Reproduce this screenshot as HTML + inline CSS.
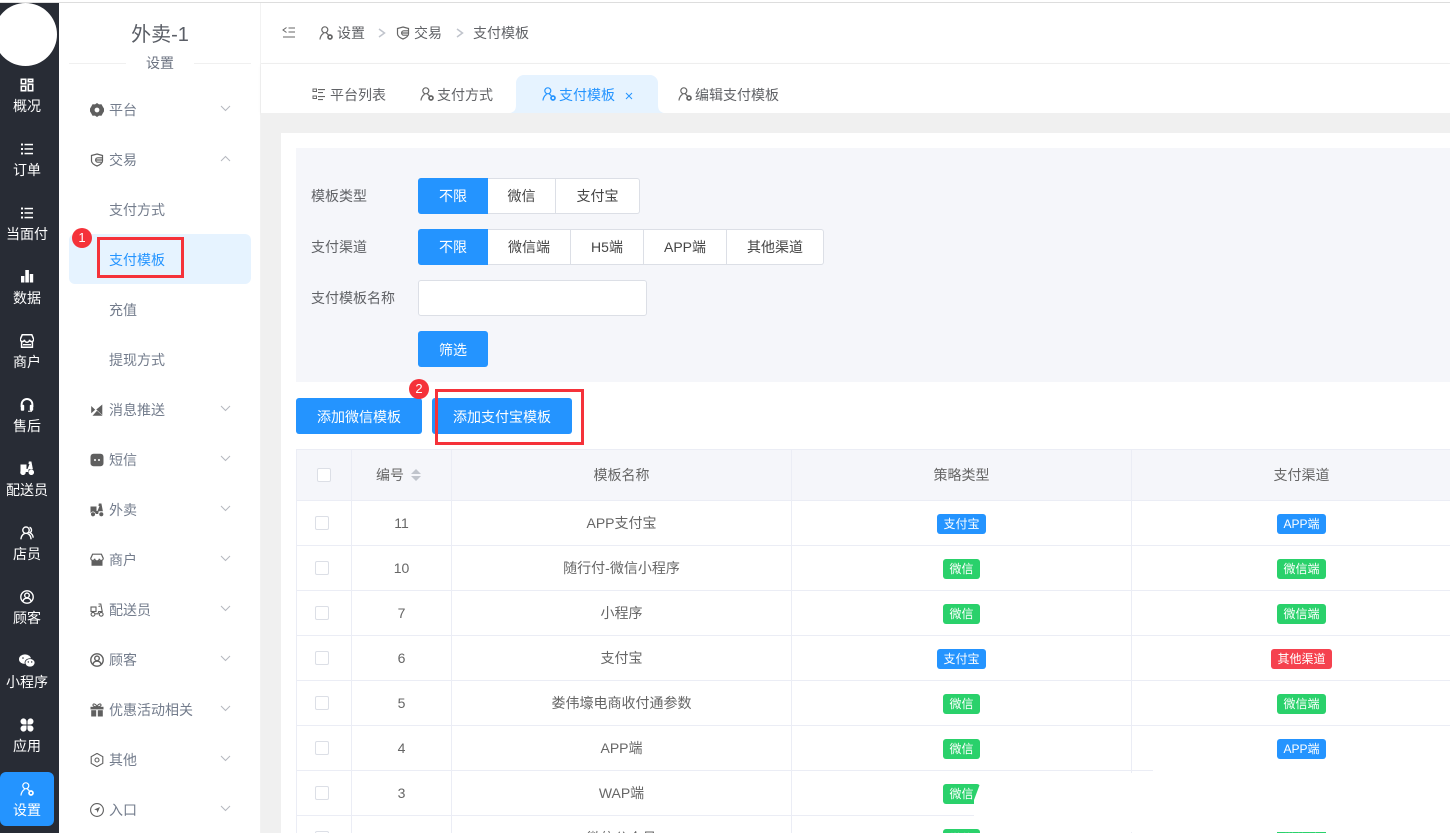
<!DOCTYPE html>
<html lang="zh-CN">
<head>
<meta charset="utf-8">
<title>支付模板</title>
<style>
*{box-sizing:border-box}
html,body{margin:0;padding:0;width:1450px;height:833px;overflow:hidden;background:#fff;font-family:"Liberation Sans","Noto Sans CJK SC",sans-serif;font-size:14px;color:#606266}
#page{position:relative;width:1450px;height:833px;overflow:hidden;background:#fff}
.a{position:absolute}
svg{display:block}
#topline{left:0;top:2px;width:1450px;height:1px;background:#ddd;z-index:9}
#dark{left:0;top:2px;width:59px;height:831px;background:#282c35;overflow:hidden}
#avatar{left:-6px;top:3px;width:63px;height:63px;border-radius:50%;background:#fff}
.ni{position:absolute;left:20px;width:14px;height:14px;color:#fff}
.nl{position:absolute;left:0;width:54px;margin-top:1px;text-align:center;color:#fff;line-height:20px;white-space:nowrap}
#act{left:0;top:772px;width:54px;height:54px;background:#2494ff;border-radius:6px}
#side{left:59px;top:3px;width:202px;height:830px;background:#fff;border-right:1px solid #f2f2f2}
#title{left:59px;top:21px;width:202px;text-align:center;font-size:20px;line-height:28px;color:#5a5e66}
#sub{left:59px;top:53px;width:202px;text-align:center;line-height:20px;color:#6b7280}
.hr{height:1px;top:63px;background:#f0f0f0}
.si{position:absolute;left:90px;width:14px;height:14px;color:#5f5f5f}
.sl{position:absolute;left:109px;line-height:20px;color:#737c8c;white-space:nowrap}
.ch{position:absolute;left:220px;width:11px;height:7px}
#sact{left:69px;top:234px;width:182px;height:50px;background:#e6f3ff;border-radius:6px}
.redbox{border:3px solid #f5323a;z-index:5}
.badge{width:20px;height:20px;border-radius:50%;background:#f5323a;color:#fff;text-align:center;line-height:20px;font-size:13px;z-index:6}
#hdr{left:261px;top:3px;width:1189px;height:61px;background:#fff;border-bottom:1px solid #f0f0f0}
.bc{position:absolute;top:23px;line-height:20px;color:#606266;white-space:nowrap}
.bs{position:absolute;top:27px;width:8px;height:12px;color:#c0c4cc}
#tabs{left:261px;top:64px;width:1189px;height:49px;background:#fff;box-shadow:0 1px 3px rgba(0,0,0,.06)}
.tl{position:absolute;top:84px;margin-top:.5px;line-height:20px;color:#606266;white-space:nowrap;z-index:3}
.ti{position:absolute;top:87px;width:14px;height:14px;color:#666;z-index:3}
#tact{left:510px;top:75px;width:154px;height:38px;z-index:2}
#bg{left:261px;top:113px;width:1189px;height:720px;background:#f0f0f0}
#panel{left:281px;top:133px;width:1169px;height:700px;background:#fff}
#filter{left:296px;top:148px;width:1154px;height:234px;background:#f5f6fa}
.fl{position:absolute;left:311px;line-height:20px;color:#606266;white-space:nowrap}
.grp{position:absolute;left:418px;height:36px;display:flex;background:#fff;border:1px solid #dcdfe6;border-left:0;border-radius:3px}
.grp span{display:block;height:34px;line-height:35px;text-align:center;border-right:1px solid #dcdfe6;color:#444;white-space:nowrap}
.grp span:last-child{border-right:0}
.grp span.on{background:#2494ff;color:#fff;margin:-1px 0;height:36px;line-height:37px;border:0;border-radius:3px 0 0 3px}
#inp{left:418px;top:280px;width:229px;height:36px;background:#fff;border:1px solid #dcdfe6;border-radius:3px}
.btn{background:#2494ff;color:#fff;text-align:center;border-radius:3px;white-space:nowrap;height:36px;line-height:38px}
#tbl{position:absolute;left:296px;top:449px;width:1176px;border-collapse:separate;border-spacing:0;table-layout:fixed;color:#666}
#tbl th,#tbl td{padding:0;text-align:center;border-right:1px solid #ebedf5;border-bottom:1px solid #ebedf5;font-weight:400;height:45px;overflow:hidden}
#tbl th{height:52px;background:#f5f6fa;border-top:1px solid #ebedf5}
#tbl th:first-child,#tbl td:first-child{border-left:1px solid #ebedf5}
.cb{display:inline-block;width:14px;height:14px;background:#fff;border:1px solid #dcdfe6;border-radius:2px;vertical-align:middle;position:relative}
.hcb{left:0;top:-1px}
.rcb{left:-2px;top:-1px}
.tag{display:inline-block;height:20px;line-height:20px;padding:0 6px;font-size:12px;color:#fff;border-radius:3px;vertical-align:middle;white-space:nowrap;position:relative;top:1px}
.b{background:#2494ff}.g{background:#2ad16b}.r{background:#f5424f}
.hw{position:relative;left:-3px;white-space:nowrap}
.sort{display:inline-block;vertical-align:middle;margin-left:7px;width:10px;height:14px;position:relative;top:-1px}
</style>
</head>
<body>
<div id="page">
<svg width="0" height="0" style="position:absolute">
<defs>
<symbol id="grid" viewBox="0 0 14 14"><g fill="none" stroke="currentColor" stroke-width="1.6"><rect x="1.3" y="1.3" width="4.4" height="4.4"/><rect x="8.3" y="1.3" width="4.4" height="2.4"/><rect x="1.3" y="8.3" width="4.4" height="4.4"/><rect x="8.3" y="6.3" width="4.4" height="6.4"/></g></symbol>
<symbol id="list" viewBox="0 0 14 14"><g fill="currentColor"><rect x="1" y="1.5" width="2" height="2"/><rect x="1" y="6" width="2" height="2"/><rect x="1" y="10.5" width="2" height="2"/><rect x="4.5" y="1.8" width="8.5" height="1.5"/><rect x="4.5" y="6.2" width="8.5" height="1.5"/><rect x="4.5" y="10.8" width="8.5" height="1.5"/></g></symbol>
<symbol id="bars" viewBox="0 0 14 14"><g fill="currentColor"><rect x="1" y="7" width="3.4" height="6.5"/><rect x="5.3" y="1" width="3.6" height="12.5"/><rect x="9.8" y="5" width="3.4" height="8.5"/></g></symbol>
<symbol id="store" viewBox="0 0 14 14"><path d="M2.2.8h9.600l1.900 4.400a2.100 2.100 0 0 1-4.200.5 2.200 2.200 0 0 1-5 0 2.100 2.100 0 0 1-4.200-.5zM1.600 7.500v5.700h10.800V7.500" fill="none" stroke="currentColor" stroke-width="1.500"/><rect x="3" y="10" width="8" height="1.400" fill="currentColor"/></symbol>
<symbol id="hset" viewBox="0 0 14 14"><path d="M1.600 9V6.400a5.400 5.400 0 0 1 10.800 0V9" fill="none" stroke="currentColor" stroke-width="1.900"/><rect x=".8" y="6.800" width="3.400" height="6" rx="1" fill="currentColor"/><rect x="9.800" y="6.800" width="3.400" height="6" rx="1" fill="currentColor"/><path d="M11.500 12v1.200H8" fill="none" stroke="currentColor"/></symbol>
<symbol id="bike" viewBox="0 0 14 14"><path d="M.5 3.500h6v6.500h-6zM8.800.5h2.600l1.500 7.700H8.700L8.200 11H5.500V8h2l2-5H8.500z" fill="currentColor"/><circle cx="3" cy="11.300" r="2.400" fill="currentColor" stroke="#fff" stroke-width=".7"/><circle cx="11.300" cy="11.300" r="2.400" fill="currentColor" stroke="#fff" stroke-width=".7"/></symbol>
<symbol id="users" viewBox="0 0 14 14"><g fill="none" stroke="currentColor" stroke-width="1.400"><circle cx="6" cy="4.200" r="3.200"/><path d="M.9 13.300c.2-3 2-5 3.600-5.800M7.500 7.500c1.800.8 3.400 2.800 3.600 5.800M9.500 1.300c2.300.6 2.800 4.400.4 5.400 1.800.9 3.100 3 3.300 5"/></g></symbol>
<symbol id="ucirc" viewBox="0 0 14 14"><g fill="none" stroke="currentColor" stroke-width="1.400"><circle cx="7" cy="7" r="6.200"/><circle cx="7" cy="5.400" r="2.300"/><path d="M2.900 11.400c.5-2.200 2.200-3.200 4.100-3.200s3.600 1 4.100 3.200"/></g></symbol>
<symbol id="wx" viewBox="0 0 16 14"><ellipse cx="6" cy="5.200" rx="6" ry="4.800" fill="currentColor"/><ellipse cx="11" cy="8.800" rx="5" ry="4.200" fill="currentColor" stroke="#282c35" stroke-width=".8"/><circle cx="4" cy="4" r=".8" fill="#282c35"/><circle cx="9.300" cy="8" r=".7" fill="#282c35"/><circle cx="12.700" cy="8" r=".7" fill="#282c35"/></symbol>
<symbol id="apps" viewBox="0 0 14 14"><g fill="currentColor"><path d="M.5 3.500A3 3 0 0 1 6.500 3.300V6.500H3.500A3 3 0 0 1 .5 3.500z"/><path d="M13.500 3.500A3 3 0 0 0 7.500 3.300V6.500H10.500A3 3 0 0 0 13.500 3.500z"/><path d="M.5 10.500A3 3 0 0 0 6.500 10.700V7.500H3.500A3 3 0 0 0 .5 10.500z"/><path d="M13.500 10.500A3 3 0 0 1 7.500 10.700V7.500H10.500A3 3 0 0 1 13.500 10.500z"/></g></symbol>
<symbol id="pset" viewBox="0 0 14 14"><g fill="none" stroke="currentColor" stroke-width="1.200"><circle cx="5.800" cy="3.800" r="3"/><path d="M1 13.500c.2-3 1.600-5 3.600-6.300M7.300 6.800l2 2"/></g><circle cx="11" cy="11" r="2" fill="none" stroke="currentColor" stroke-width="1.700"/></symbol>
<symbol id="gear" viewBox="0 0 14 14"><path fill-rule="evenodd" d="M7 0l2 1.400 2.500-.1 1.200 2.200L14 5.600v2.800l-1.300 2.100-1.200 2.200-2.500-.1L7 14l-2-1.400-2.500.1-1.200-2.200L0 8.400V5.600l1.300-2.100 1.200-2.200 2.500.1zM7 4.600a2.400 2.400 0 1 0 0 4.800 2.400 2.400 0 0 0 0-4.800z" fill="currentColor"/></symbol>
<symbol id="shield" viewBox="0 0 14 14"><path d="M7 1l5.500 1.500V8c0 1.900-2.400 4-5.500 5C3.900 12 1.500 9.900 1.500 8V2.500z" fill="none" stroke="currentColor" stroke-width="1.200"/><path d="M12.500 4.800H7.800a2.200 2.200 0 0 0 0 4.400h3.600M5.800 7h6.500" fill="none" stroke="currentColor" stroke-width="1.200"/></symbol>
<symbol id="plane" viewBox="0 0 14 14"><path d="M1.800 1.500h10.500l-6 5 6 5.500V1.500zM1.200 3l4 3.700-4 3.500zM12.600 12.800H2.500l4.500-5z" fill="currentColor"/></symbol>
<symbol id="sms" viewBox="0 0 14 14"><rect x=".5" y=".8" width="13" height="12.400" rx="3" fill="currentColor"/><circle cx="5" cy="7" r="1" fill="#fff"/><circle cx="9" cy="7" r="1" fill="#fff"/></symbol>
<symbol id="store2" viewBox="0 0 14 14"><path d="M2.600 1.200h8.800l1.800 4a2 2 0 0 1-4 .5 2 2 0 0 1-4.400 0 2 2 0 0 1-4-.5z" fill="none" stroke="currentColor" stroke-width="1.200"/><path d="M1.500 7.500c1.500.7 3 .4 3.500-.2.800.8 3.200.8 4 0 .5.600 2 .9 3.500.2v5.300h-11z" fill="currentColor"/></symbol>
<symbol id="bike2" viewBox="0 0 14 14"><g fill="none" stroke="currentColor" stroke-width="1.100"><rect x="1" y="4" width="5" height="4.500"/><path d="M8.500 1h2.300l1.400 7.500H8.700L8 10.800H5.200M8.500 3.500l1.800-.5"/><circle cx="3" cy="11.300" r="1.900"/><circle cx="11.200" cy="11.300" r="1.900"/></g></symbol>
<symbol id="gift" viewBox="0 0 14 14"><g fill="currentColor"><rect x=".5" y="3.800" width="13" height="2.600"/><rect x="1.200" y="7.200" width="5" height="6.300"/><rect x="7.800" y="7.200" width="5" height="6.300"/></g><path d="M7 3.500C5.500.5 3 .3 3 2s2.500 1.800 4 1.500c1.500.3 4 .2 4-1.500S8.500.5 7 3.500z" fill="none" stroke="currentColor" stroke-width="1.100"/></symbol>
<symbol id="hexo" viewBox="0 0 14 14"><g fill="none" stroke="currentColor" stroke-width="1.100"><path d="M7 .4l5.800 3.300v6.600L7 13.600 1.200 10.300V3.700z"/><circle cx="7" cy="7" r="2"/></g></symbol>
<symbol id="comp" viewBox="0 0 14 14"><circle cx="7" cy="7" r="6.400" fill="none" stroke="currentColor" stroke-width="1.100"/><path d="M10 4L7.500 9.800 6.800 7.200 4.200 6.500z" fill="currentColor"/></symbol>
<symbol id="lst2" viewBox="0 0 14 14"><g fill="none" stroke="currentColor" stroke-width="1"><rect x="1" y="2" width="3.500" height="2.500"/><rect x="1" y="9" width="3.500" height="2.500"/></g><g fill="currentColor"><rect x="6" y="2" width="7" height="1.100"/><rect x="6" y="5" width="5" height="1.100"/><rect x="6" y="9" width="7" height="1.100"/><rect x="6" y="12" width="5" height="1.100"/></g></symbol>
<symbol id="dn" viewBox="0 0 11 7"><path d="M1 1l4.500 4.500L10 1" fill="none" stroke="#b5b8bf" stroke-width="1"/></symbol>
<symbol id="up" viewBox="0 0 11 7"><path d="M1 6l4.500-4.500L10 6" fill="none" stroke="#b5b8bf" stroke-width="1"/></symbol>
</defs>
</svg>

<div class="a" id="topline"></div>

<!-- dark nav -->
<div class="a" id="dark"></div>
<div class="a" id="avatar"></div>
<div class="a" id="act"></div>
<svg class="ni" style="top:78px"><use href="#grid"/></svg><div class="nl" style="top:95px">概况</div>
<svg class="ni" style="top:142px"><use href="#list"/></svg><div class="nl" style="top:159px">订单</div>
<svg class="ni" style="top:206px"><use href="#list"/></svg><div class="nl" style="top:223px">当面付</div>
<svg class="ni" style="top:269px"><use href="#bars"/></svg><div class="nl" style="top:287px">数据</div>
<svg class="ni" style="top:334px"><use href="#store"/></svg><div class="nl" style="top:351px">商户</div>
<svg class="ni" style="top:398px"><use href="#hset"/></svg><div class="nl" style="top:415px">售后</div>
<svg class="ni" style="top:461px"><use href="#bike"/></svg><div class="nl" style="top:479px">配送员</div>
<svg class="ni" style="top:526px"><use href="#users"/></svg><div class="nl" style="top:543px">店员</div>
<svg class="ni" style="top:590px"><use href="#ucirc"/></svg><div class="nl" style="top:607px">顾客</div>
<svg class="ni" style="top:654px;width:16px;left:19px"><use href="#wx"/></svg><div class="nl" style="top:671px">小程序</div>
<svg class="ni" style="top:718px"><use href="#apps"/></svg><div class="nl" style="top:735px">应用</div>
<svg class="ni" style="top:782px"><use href="#pset"/></svg><div class="nl" style="top:799px">设置</div>

<!-- second nav -->
<div class="a" id="side"></div>
<div class="a" id="title">外卖-1</div>
<div class="a" id="sub">设置</div>
<div class="a hr" style="left:69px;width:57px"></div>
<div class="a hr" style="left:194px;width:57px"></div>
<div class="a" id="sact"></div>

<svg class="si" style="top:103px"><use href="#gear"/></svg><div class="sl" style="top:100px">平台</div><svg class="ch" style="top:105px"><use href="#dn"/></svg>
<svg class="si" style="top:153px"><use href="#shield"/></svg><div class="sl" style="top:150px">交易</div><svg class="ch" style="top:155px"><use href="#up"/></svg>
<div class="sl" style="top:200px">支付方式</div>
<div class="sl" style="top:250px;color:#2494ff">支付模板</div>
<div class="sl" style="top:300px">充值</div>
<div class="sl" style="top:350px">提现方式</div>
<svg class="si" style="top:403px"><use href="#plane"/></svg><div class="sl" style="top:400px">消息推送</div><svg class="ch" style="top:405px"><use href="#dn"/></svg>
<svg class="si" style="top:453px"><use href="#sms"/></svg><div class="sl" style="top:450px">短信</div><svg class="ch" style="top:455px"><use href="#dn"/></svg>
<svg class="si" style="top:503px"><use href="#bike"/></svg><div class="sl" style="top:500px">外卖</div><svg class="ch" style="top:505px"><use href="#dn"/></svg>
<svg class="si" style="top:553px"><use href="#store2"/></svg><div class="sl" style="top:550px">商户</div><svg class="ch" style="top:555px"><use href="#dn"/></svg>
<svg class="si" style="top:603px"><use href="#bike2"/></svg><div class="sl" style="top:600px">配送员</div><svg class="ch" style="top:605px"><use href="#dn"/></svg>
<svg class="si" style="top:653px"><use href="#ucirc"/></svg><div class="sl" style="top:650px">顾客</div><svg class="ch" style="top:655px"><use href="#dn"/></svg>
<svg class="si" style="top:703px"><use href="#gift"/></svg><div class="sl" style="top:700px">优惠活动相关</div><svg class="ch" style="top:705px"><use href="#dn"/></svg>
<svg class="si" style="top:753px"><use href="#hexo"/></svg><div class="sl" style="top:750px">其他</div><svg class="ch" style="top:755px"><use href="#dn"/></svg>
<svg class="si" style="top:803px"><use href="#comp"/></svg><div class="sl" style="top:800px">入口</div><svg class="ch" style="top:805px"><use href="#dn"/></svg>

<div class="a redbox" style="left:97px;top:237px;width:87px;height:41px"></div>
<div class="a badge" style="left:72px;top:228px">1</div>

<!-- header -->
<div class="a" id="hdr"></div>
<svg class="a" style="left:282px;top:26px" width="14" height="14" viewBox="0 0 14 14"><path d="M4.500 1.500L1 4l3.500 2.500M6.500 2h6.500M6.500 6h6.500M1 11h12" fill="none" stroke="#666" stroke-width="1"/></svg>
<svg class="ti" style="left:319px;top:26px"><use href="#pset"/></svg><div class="bc" style="left:337px">设置</div>
<svg class="bs" style="left:378px" viewBox="0 0 8 12"><path d="M1 2l5.500 4L1 10" fill="none" stroke="currentColor" stroke-width="1.500"/></svg>
<svg class="ti" style="left:396px;top:26px"><use href="#shield"/></svg><div class="bc" style="left:414px">交易</div>
<svg class="bs" style="left:456px" viewBox="0 0 8 12"><path d="M1 2l5.500 4L1 10" fill="none" stroke="currentColor" stroke-width="1.500"/></svg>
<div class="bc" style="left:473px">支付模板</div>

<!-- tabs -->
<div class="a" id="tabs"></div>
<svg class="a" id="tact" viewBox="0 0 154 38"><path d="M0 38c4-1 6-3 6-8V8a8 8 0 0 1 8-8h126a8 8 0 0 1 8 8v22c0 5 2 7 6 8z" fill="#e6f3ff"/></svg>
<svg class="ti" style="left:312px"><use href="#lst2"/></svg><div class="tl" style="left:330px">平台列表</div>
<svg class="ti" style="left:420px"><use href="#pset"/></svg><div class="tl" style="left:437px">支付方式</div>
<svg class="ti" style="left:542px;color:#2494ff"><use href="#pset"/></svg><div class="tl" style="left:559px;color:#2494ff">支付模板</div>
<svg class="a" style="left:625px;top:92px;z-index:3" width="8" height="8" viewBox="0 0 8 8"><path d="M1 1l6 6M7 1L1 7" stroke="#2494ff" stroke-width="1" fill="none"/></svg>
<svg class="ti" style="left:678px"><use href="#pset"/></svg><div class="tl" style="left:695px">编辑支付模板</div>

<!-- content -->
<div class="a" id="bg"></div>
<div class="a" id="panel"></div>
<div class="a" id="filter"></div>

<div class="fl" style="top:186px">模板类型</div>
<div class="grp" style="top:178px;width:222px">
<span class="on" style="width:70px">不限</span><span style="width:68px">微信</span><span style="width:83px">支付宝</span>
</div>
<div class="fl" style="top:237px">支付渠道</div>
<div class="grp" style="top:229px;width:406px">
<span class="on" style="width:70px">不限</span><span style="width:83px">微信端</span><span style="width:73px">H5端</span><span style="width:83px">APP端</span><span style="width:96px">其他渠道</span>
</div>
<div class="fl" style="top:288px">支付模板名称</div>
<div class="a" id="inp"></div>
<div class="a btn" style="left:418px;top:331px;width:70px">筛选</div>

<div class="a btn" style="left:296px;top:398px;width:126px">添加微信模板</div>
<div class="a btn" style="left:432px;top:398px;width:140px">添加支付宝模板</div>
<div class="a redbox" style="left:435px;top:389px;width:149px;height:56px"></div>
<div class="a badge" style="left:409px;top:379px">2</div>

<!-- table -->
<table id="tbl">
<colgroup><col style="width:56px"><col style="width:100px"><col style="width:340px"><col style="width:340px"><col style="width:340px"></colgroup>
<thead><tr>
<th><i class="cb hcb"></i></th>
<th><span class="hw">编号<span class="sort"><svg width="10" height="14" viewBox="0 0 10 14"><path d="M5 1l5 5H0zM5 13L0 8h10z" fill="#c0c4cc"/></svg></span></span></th>
<th>模板名称</th><th>策略类型</th><th>支付渠道</th>
</tr></thead>
<tbody>
<tr><td><i class="cb rcb"></i></td><td>11</td><td>APP支付宝</td><td><span class="tag b">支付宝</span></td><td><span class="tag b">APP端</span></td></tr>
<tr><td><i class="cb rcb"></i></td><td>10</td><td>随行付-微信小程序</td><td><span class="tag g">微信</span></td><td><span class="tag g">微信端</span></td></tr>
<tr><td><i class="cb rcb"></i></td><td>7</td><td>小程序</td><td><span class="tag g">微信</span></td><td><span class="tag g">微信端</span></td></tr>
<tr><td><i class="cb rcb"></i></td><td>6</td><td>支付宝</td><td><span class="tag b">支付宝</span></td><td><span class="tag r">其他渠道</span></td></tr>
<tr><td><i class="cb rcb"></i></td><td>5</td><td>娄伟壕电商收付通参数</td><td><span class="tag g">微信</span></td><td><span class="tag g">微信端</span></td></tr>
<tr><td><i class="cb rcb"></i></td><td>4</td><td>APP端</td><td><span class="tag g">微信</span></td><td><span class="tag b">APP端</span></td></tr>
<tr><td><i class="cb rcb"></i></td><td>3</td><td>WAP端</td><td><span class="tag g">微信</span></td><td><span class="tag g">微信端</span></td></tr>
<tr><td><i class="cb rcb"></i></td><td>2</td><td>微信公众号</td><td><span class="tag g">微信</span></td><td><span class="tag g">微信端</span></td></tr>
</tbody>
</table>

<!-- white capture artefact over the table -->
<svg class="a" style="left:0;top:0;z-index:4;pointer-events:none" width="1450" height="833" viewBox="0 0 1450 833"><path d="M974 829V800L980 784L985 771H1130V773H1153V769H1450V832H981V829z" fill="#fff"/></svg>
</div>
</body>
</html>
